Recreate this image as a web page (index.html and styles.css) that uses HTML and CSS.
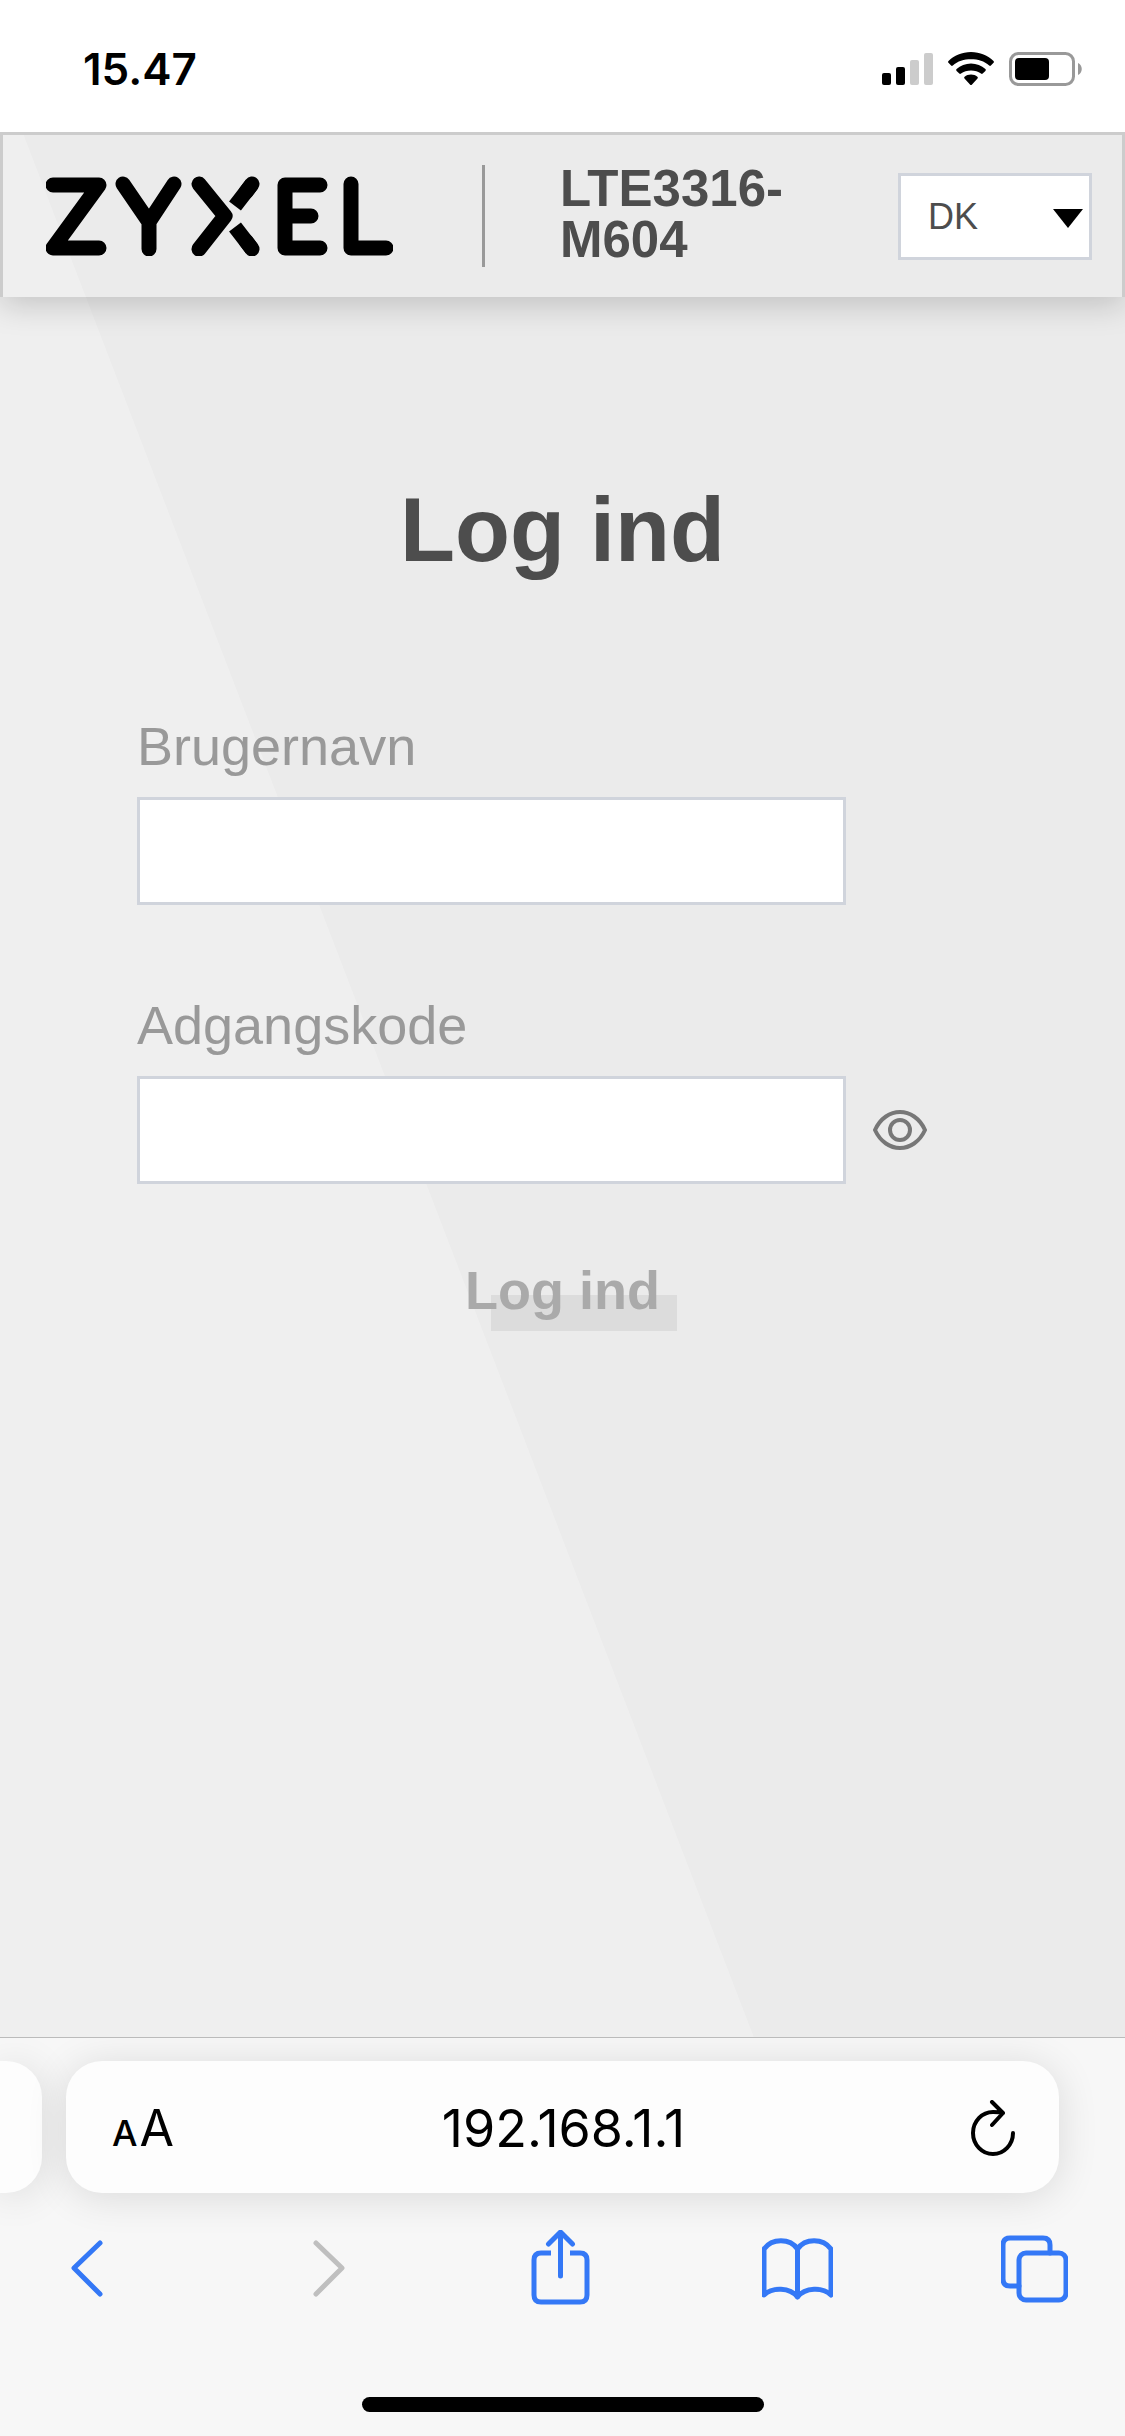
FILE: index.html
```html
<!DOCTYPE html>
<html lang="da">
<head>
<meta charset="UTF-8">
<meta name="viewport" content="width=device-width, initial-scale=1.0">
<title>Log ind</title>

<link rel="stylesheet" href="styles.css">
</head>

<body>

<div class="status-bar">
  <span class="time">15.47</span>

  <div class="status-icons">
    <svg width="51" height="34" viewBox="0 0 51 34">
      <rect x="0" y="21" width="9" height="12" rx="2"/>
      <rect x="14" y="15" width="9" height="18" rx="2"/>
      <rect x="28" y="8" width="9" height="25" rx="2" fill="#ccc"/>
      <rect x="42" y="1" width="9" height="32" rx="2" fill="#ccc"/>
    </svg>
    <svg width="46" height="34" viewBox="0 0 46 34">
      <path d="M23 0C14 0 6 3.500 .5 9c-.6.6-.6 1.200 0 1.800l2.600 2.700c.5.500 1.200.500 1.700 0C9.600 9 16 7.200 23 7.200S36.400 9 41.200 13.500c.5.500 1.200.500 1.700 0l2.600-2.700c.6-.6.6-1.200 0-1.800C40 3.500 32 0 23 0z"/>
      <path d="M23 11.500c-5.500 0-10.600 2.100-14.400 5.600-.6.600-.6 1.200 0 1.800l2.700 2.700c.5.500 1.100.500 1.700 0 2.700-2.400 6.200-3.200 10-3.200s7.300.8 10 3.200c.6.500 1.200.500 1.700 0l2.700-2.700c.6-.6.6-1.200 0-1.800-3.800-3.500-8.900-5.600-14.400-5.600z"/>
      <path d="M23 22.500c-2.500 0-4.700.9-6.400 2.300-.6.500-.6 1.200-.1 1.700l5.700 6.200c.5.500 1.100.500 1.600 0l5.700-6.200c.5-.5.5-1.200-.1-1.700-1.700-1.400-3.900-2.300-6.400-2.300z"/>
    </svg>
    <svg width="73" height="34" viewBox="0 0 73 34">
      <rect x="1.500" y="1.500" width="63" height="31" rx="8" fill="none" stroke="#999" stroke-width="3"/>
      <rect x="6" y="6" width="34" height="22" rx="4"/>
      <path d="M69 11c5 2 5 10 0 12z" fill="#999"/>
    </svg>
  </div>
</div>

<div class="page">
  <header class="header">
    <svg class="logo" viewBox="0 0 347 80" role="img" aria-label="Zyxel">
      <path d="M7 9H53L7 72H53M77 8L103 46L128 8M103 44V73M153 8L179 40L153 73M239 72V9H274M239 40H265M239 72H274M305 8V72H340"/>
      <path d="M206 8L200 16M206 73L200 65"/>
      <path class="cut" d="M206 8L189 30M206 73L189 51"/>
    </svg>
    <div class="divider"></div>
    <div class="model">LTE3316-M604</div>
    <div class="language">
      <select aria-label="Sprog">
        <option>DK</option>
        <option>EN</option>
      </select>
    </div>
  </header>

  <form class="login">
    <h1>Log ind</h1>

    <label for="username">Brugernavn</label>
    <input id="username" type="text">

    <label for="password">Adgangskode</label>
    <div class="password-row">
      <input id="password" type="password">
      <button class="eye" type="button" aria-label="Vis adgangskode">
        <svg width="54" height="40" viewBox="0 0 54 40">
          <path d="M2 20C13-4 41-4 52 20C41 44 13 44 2 20z"/>
          <circle cx="27" cy="20" r="10"/>
        </svg>
      </button>
    </div>

    <button class="submit" type="button">Log ind</button>
  </form>
</div>

<div class="browser-bar">
  <div class="tabs">
    <div class="prev-tab"></div>
    <div class="address">
      <button class="text-size" aria-label="Tekststørrelse"><small>A</small>A</button>
      <span class="url">192.168.1.1</span>
      <button class="reload" aria-label="Genindlæs">
        <svg width="44" height="56" viewBox="0 0 44 56">
          <path d="M42 33A20 21 0 1 1 22 12C26 12 29 12 32 13M21 2L32 13L21 25"/>
        </svg>
      </button>
    </div>
  </div>

  <nav class="toolbar">
    <button aria-label="Tilbage">
      <svg width="67" height="76" viewBox="0 0 67 76"><path d="M43 13L17 38L43 64"/></svg>
    </button>
    <button class="disabled" aria-label="Frem" disabled>
      <svg width="67" height="76" viewBox="0 0 67 76"><path d="M24 13L50 38L24 64"/></svg>
    </button>
    <button aria-label="Del">
      <svg width="67" height="76" viewBox="0 0 67 76"><path stroke-linecap="butt" d="M24 23H14Q7 23 7 30V65Q7 72 14 72H53Q60 72 60 65V30Q60 23 53 23H43"/><path d="M33.500 46V3M21.500 14L33.500 2L45.500 14"/></svg>
    </button>
    <button aria-label="Bogmærker">
      <svg width="71" height="76" viewBox="0 0 71 76"><path d="M35.500 19C28 8 10 8 2 19V65C10 57 28 57 35.500 67C43 57 61 57 69 65V19C61 8 43 8 35.500 19V67"/></svg>
    </button>
    <button aria-label="Faner">
      <svg width="67" height="76" viewBox="0 0 67 76"><rect x="18" y="23" width="47" height="47" rx="7"/><path d="M18 56H9Q2 56 2 49V15Q2 8 9 8H42Q49 8 49 15V23"/></svg>
    </button>
  </nav>

  <div class="home-indicator"></div>
</div>

</body>
</html>
```
FILE: styles.css
```css
* {
  box-sizing: border-box;
}

body {
  margin: 0;
  min-height: 100vh;
  display: flex;
  flex-direction: column;
  font-family: "Liberation Sans", Arial, sans-serif;
  background: white;
}

button {
  padding: 0;
  border: none;
  background: none;
  cursor: pointer;
}

svg {
  display: block;
}

/* status bar */

.status-bar {
  height: 132px;
  padding: 6px 43px 0 83px;
  display: flex;
  align-items: center;
  justify-content: space-between;
}

.time {
  font: 600 44px Inter, sans-serif;
}

.status-icons {
  display: flex;
  gap: 15px;
}

/* page */

.page {
  flex: 1;
  position: relative;
  overflow: hidden;
  background: #ebebeb;
}

/* lighter diagonal area */
.page::before {
  content: "";
  position: absolute;
  inset: 0;
  background: #efefef;
  clip-path: polygon(0 0, 2% 0, 67% 100%, 0 100%);
}

.header {
  position: relative;
  height: 165px;
  padding: 0 30px 0 43px;
  display: flex;
  align-items: center;
  border: 3px solid #ccc;
  border-bottom: none;
  box-shadow: 0 8px 30px rgba(0,0,0,0.18);
}

.logo {
  width: 347px;
  height: 80px;
  fill: none;
  stroke: black;
  stroke-width: 15;
  stroke-linecap: round;
  stroke-linejoin: round;
}

.logo .cut {
  stroke-linecap: butt;
}

.divider {
  width: 3px;
  height: 102px;
  margin: 0 75px 0 89px;
  background: #999;
}

.model {
  flex: 1;
  margin: 0 80px 4px 0;
  font-size: 51px;
  line-height: 51px;
  font-weight: bold;
  color: #4d4d4d;
}

.language {
  position: relative;
}

.language select {
  appearance: none;
  width: 194px;
  height: 87px;
  padding: 0 27px;
  border: 3px solid #d0d4dc;
  border-radius: 0;
  background: white;
  font: 36px "Liberation Sans", Arial, sans-serif;
  color: #4d4d4d;
}

.language::after {
  content: "";
  position: absolute;
  top: 36px;
  right: 9px;
  border: solid transparent;
  border-width: 19px 15px 0;
  border-top-color: black;
  pointer-events: none;
}

.login {
  position: relative;
  padding: 182px 137px 0;
}

h1 {
  margin: 0 0 134px;
  text-align: center;
  font-size: 90px;
  line-height: 102px;
  color: #4d4d4d;
}

label {
  display: block;
  margin-bottom: 20px;
  font-size: 54px;
  line-height: 62px;
  color: #999;
}

.login input {
  display: block;
  width: 709px;
  max-width: 100%;
  height: 108px;
  margin-bottom: 89px;
  padding: 0 24px;
  border: 3px solid #d0d4dc;
  border-radius: 0;
  background: white;
  font-size: 54px;
}

.password-row {
  display: flex;
  align-items: center;
  gap: 27px;
  margin-bottom: 75px;
}

.login .password-row input {
  margin-bottom: 0;
}

.eye svg {
  fill: none;
  stroke: #777;
  stroke-width: 4;
}

.submit {
  display: block;
  margin: 0 auto;
  padding: 0 18px 10px;
  font: bold 54px/62px "Liberation Sans", Arial, sans-serif;
  color: #aaa;
  background: linear-gradient(#dcdcdc, #dcdcdc) 44px 36px / 186px 36px no-repeat;
}

/* browser bar */

.browser-bar {
  height: 399px;
  border-top: 1px solid #bbb;
  background: #f7f7f7;
  overflow: hidden;
}

.tabs {
  display: flex;
  gap: 24px;
  padding: 23px 66px 0 0;
}

.prev-tab,
.address {
  height: 132px;
  background: #fdfdfd;
  box-shadow: 0 4px 40px rgba(0,0,0,0.12);
}

.prev-tab {
  width: 42px;
  border-radius: 0 36px 36px 0;
}

.address {
  flex: 1;
  display: grid;
  grid-template-columns: 1fr auto 1fr;
  align-items: center;
  padding: 2px 44px 0 46px;
  border-radius: 36px;
  font-family: Inter, sans-serif;
}

.text-size {
  justify-self: start;
  font: 50px Inter, sans-serif;
  color: black;
}

.text-size small {
  margin-right: 2px;
  font-size: 36px;
  font-weight: 500;
}

.url {
  font-size: 52px;
}

.reload {
  justify-self: end;
}

.address svg {
  fill: none;
  stroke: black;
  stroke-width: 4;
  stroke-linecap: round;
  stroke-linejoin: round;
}

.toolbar {
  display: flex;
  justify-content: space-between;
  padding: 37px 57px 0;
}

.toolbar svg {
  fill: none;
  stroke: #3478f6;
  stroke-width: 5;
  stroke-linecap: round;
  stroke-linejoin: round;
}

.toolbar .disabled svg {
  stroke: #bfbfbf;
}

.home-indicator {
  width: 402px;
  height: 15px;
  margin: 91px auto 0;
  border-radius: 8px;
  background: black;
}
```
